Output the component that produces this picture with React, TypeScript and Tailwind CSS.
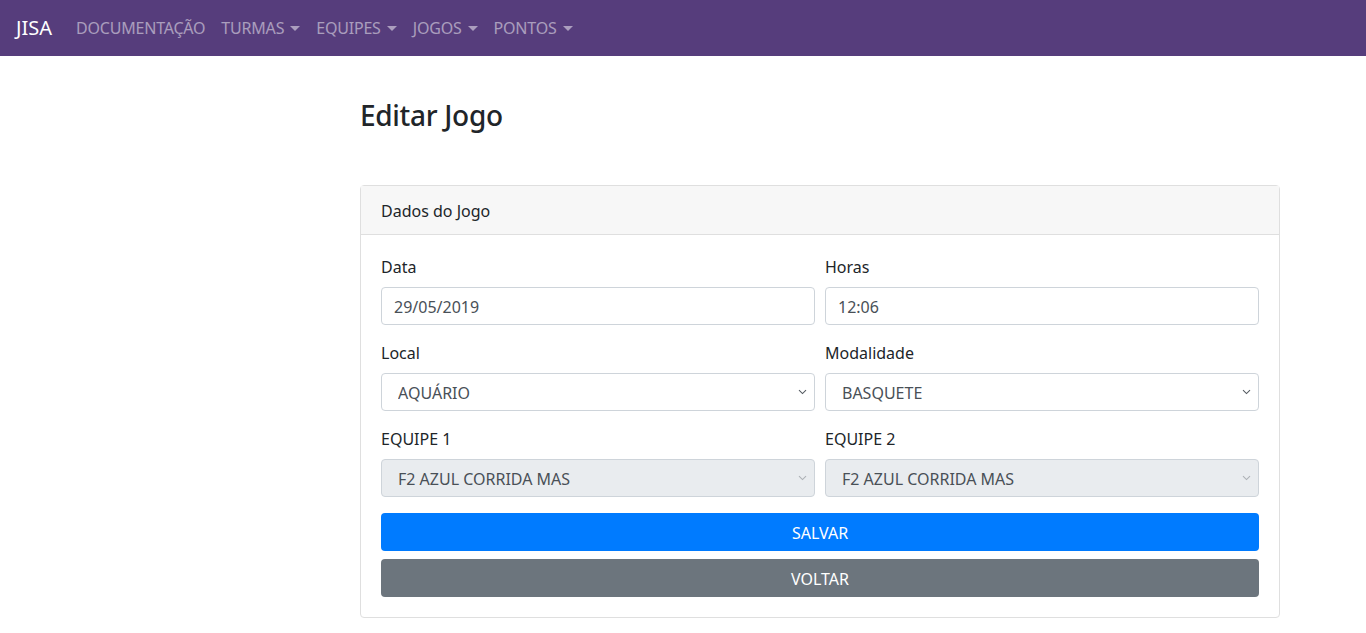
import { useState } from "react";

const navItems = ["TURMAS", "EQUIPES", "JOGOS", "PONTOS"];

const Chevron = ({ faded }: { faded?: boolean }) => (
  <svg
    width="9"
    height="6"
    viewBox="0 0 9 6"
    className={`pointer-events-none absolute right-[8px] top-1/2 -translate-y-1/2 ${faded ? "opacity-40" : ""}`}
  >
    <path d="M1 1.2 L4.5 4.6 L8 1.2" stroke="#555b62" strokeWidth="1.1" fill="none" />
  </svg>
);

const Field = ({ label, children }: { label: string; children: React.ReactNode }) => (
  <div className="flex w-full flex-col">
    <label className="mb-2 text-[16px] leading-6 text-[#212529]">{label}</label>
    {children}
  </div>
);

const Select = ({ value, disabled }: { value: string; disabled?: boolean }) => (
  <div className="relative w-full">
    <select
      disabled={disabled}
      defaultValue={value}
      className={`h-[38px] w-full appearance-none rounded-[4px] border border-[#ced4da] pt-[7px] pb-[5px] pl-[16px] pr-8 text-[16px] leading-6 text-[#495057] outline-none ${
        disabled ? "bg-[#e9ecef]" : "bg-white"
      }`}
    >
      <option>{value}</option>
    </select>
    <Chevron faded={disabled} />
  </div>
);

const App = () => {
  const [data, setData] = useState("29/05/2019");
  const [horas, setHoras] = useState("12:06");

  return (
    <div className="min-h-screen bg-white font-['Noto_Sans','Open_Sans',sans-serif]">
      {/* navbar */}
      <nav className="flex h-[56px] w-full flex-row items-center bg-[#563d7c] px-4">
        <span className="mr-4 text-[20px] leading-[30px] text-white">JISA</span>
        <a className="px-2 text-[16px] tracking-[-0.2px] text-white/50">DOCUMENTAÇÃO</a>
        {navItems.map((item) => (
          <a key={item} className="flex flex-row items-center px-2 text-[16px] tracking-[-0.2px] text-white/50">
            {item}
            <span className="ml-[6px] inline-block h-0 w-0 border-x-[5px] border-t-[5px] border-x-transparent border-t-white/50" />
          </a>
        ))}
      </nav>

      <main className="pl-[360px] pt-[42px]">
        <div className="flex w-[920px] flex-col">
          <h3 className="mb-[53px] text-[28px] font-medium leading-[34px] tracking-[-0.3px] text-[#212529]">Editar Jogo</h3>

          <section className="flex flex-col rounded-[4px] border border-[#dfdfdf]">
            <header className="border-b border-[#dfdfdf] bg-[#f7f7f7] px-5 pt-[13px] pb-[11px] text-[16px] leading-6 text-[#212529]">
              Dados do Jogo
            </header>

            <div className="flex flex-col p-5">
              <div className="mb-4 flex flex-row gap-[10px]">
                <Field label="Data">
                  <input
                    value={data}
                    onChange={(e) => setData(e.target.value)}
                    className="h-[38px] w-full rounded-[4px] border border-[#ced4da] px-3 pt-[7px] pb-[5px] text-[16px] leading-6 text-[#495057] outline-none"
                  />
                </Field>
                <Field label="Horas">
                  <input
                    value={horas}
                    onChange={(e) => setHoras(e.target.value)}
                    className="h-[38px] w-full rounded-[4px] border border-[#ced4da] px-3 pt-[7px] pb-[5px] text-[16px] leading-6 text-[#495057] outline-none"
                  />
                </Field>
              </div>

              <div className="mb-4 flex flex-row gap-[10px]">
                <Field label="Local">
                  <Select value="AQUÁRIO" />
                </Field>
                <Field label="Modalidade">
                  <Select value="BASQUETE" />
                </Field>
              </div>

              <div className="mb-4 flex flex-row gap-[10px]">
                <Field label="EQUIPE 1">
                  <Select value="F2 AZUL CORRIDA MAS" disabled />
                </Field>
                <Field label="EQUIPE 2">
                  <Select value="F2 AZUL CORRIDA MAS" disabled />
                </Field>
              </div>

              <button className="h-[38px] w-full rounded-[4px] bg-[#007bff] pt-[1px] text-[16px] text-white">SALVAR</button>
              <button className="mt-2 h-[38px] w-full rounded-[4px] bg-[#6c757d] pt-[1px] text-[16px] text-white">VOLTAR</button>
            </div>
          </section>
        </div>
      </main>
    </div>
  );
};

export default App;
